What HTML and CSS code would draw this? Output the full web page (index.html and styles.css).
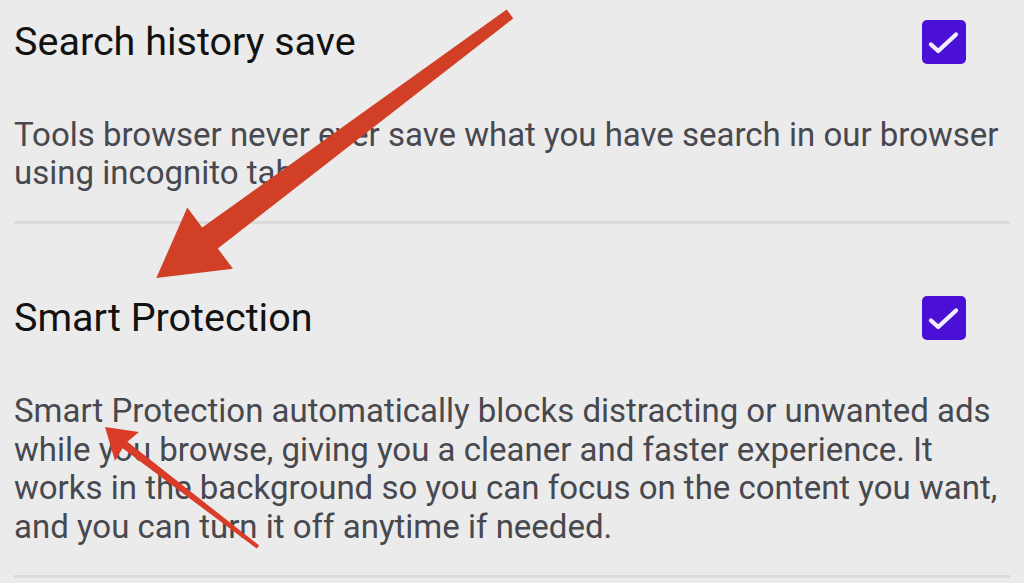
FILE: index.html
```html
<!DOCTYPE html>
<html lang="en">
<head>
<meta charset="utf-8">
<title>Settings</title>
<link rel="stylesheet" href="styles.css">
</head>
<body>
<main class="settings">
  <section class="item item-first">
    <div class="item-head">
      <h2 class="item-title">Search history save</h2>
      <span class="checkbox" role="checkbox" aria-checked="true">
        <svg viewBox="0 0 44 44" width="44" height="44"><path d="M9 24.5 L16.2 31 L34 14.5" fill="none" stroke="#f3eefc" stroke-width="4.3" stroke-linecap="round" stroke-linejoin="round"/></svg>
      </span>
    </div>
    <p class="item-desc">Tools browser never ever save what you have search in our browser<br>using incognito tab</p>
  </section>
  <section class="item">
    <div class="item-head">
      <h2 class="item-title">Smart Protection</h2>
      <span class="checkbox" role="checkbox" aria-checked="true">
        <svg viewBox="0 0 44 44" width="44" height="44"><path d="M9 24.5 L16.2 31 L34 14.5" fill="none" stroke="#f3eefc" stroke-width="4.3" stroke-linecap="round" stroke-linejoin="round"/></svg>
      </span>
    </div>
    <p class="item-desc">Smart Protection automatically blocks distracting or unwanted ads<br>while you browse, giving you a cleaner and faster experience. It<br>works in the background so you can focus on the content you want,<br>and you can turn it off anytime if needed.</p>
  </section>
</main>
<svg class="annotations" viewBox="0 0 1024 583" width="1024" height="583" aria-hidden="true">
  <polygon class="arrow" points="513.3,18.4 217.8,248.4 233,268.8 156.3,278 187.3,207.6 202.2,227.6 506.7,9.6"/>
  <polygon class="arrow arrow-small" points="259.2,545.4 127.4,441.8 139,432 105,427 115,461 122.6,448.2 256.8,548.6"/>
</svg>
</body>
</html>
```

FILE: styles.css
```css
html, body {
  margin: 0;
  padding: 0;
}
body {
  position: relative;
  width: 1024px;
  height: 583px;
  overflow: hidden;
  background: #ebebeb;
  font-family: Roboto, "Liberation Sans", Arial, sans-serif;
}
.settings {
  padding: 0 14px;
}
.item {
  padding: 72px 0 28.5px;
  border-bottom: 3px solid #dadada;
}
.item-first {
  padding-top: 20px;
}
.item-head {
  display: flex;
  align-items: center;
  justify-content: space-between;
  height: 44px;
}
.item-title {
  margin: 0;
  font-size: 39.5px;
  font-weight: 400;
  line-height: 44px;
  color: #121212;
  white-space: nowrap;
}
.checkbox {
  display: block;
  width: 44px;
  height: 44px;
  margin-right: 44px;
  border-radius: 5px;
  background: #4b10d5;
}
.checkbox svg {
  display: block;
}
.item-desc {
  margin: 51.5px 0 0;
  font-size: 33px;
  line-height: 38.7px;
  color: #48484f;
  white-space: nowrap;
}
.annotations {
  position: absolute;
  top: 0;
  left: 0;
  pointer-events: none;
}
.arrow {
  fill: #d03f26;
}
.arrow-small {
  fill: #da3c28;
}
```
